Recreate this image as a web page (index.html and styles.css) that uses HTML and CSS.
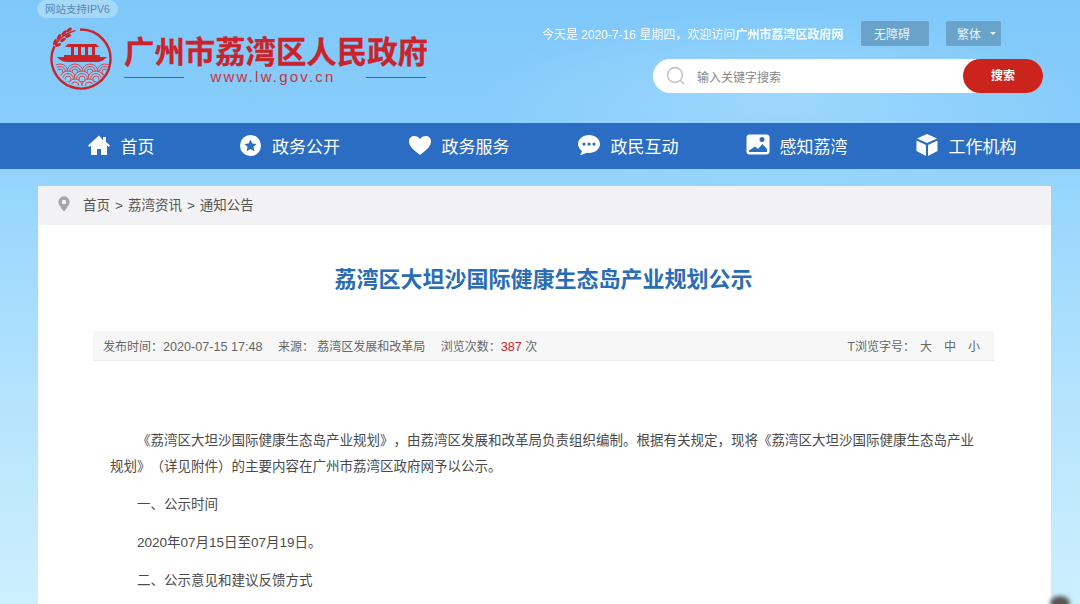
FILE: index.html
```html
<!DOCTYPE html>
<html lang="zh">
<head>
<meta charset="utf-8">
<title>荔湾区大坦沙国际健康生态岛产业规划公示</title>
<link rel="stylesheet" href="styles.css">
</head>
<body>
<header class="header">
  <div class="brand">
    <span class="ipv6">网站支持IPV6</span>
    <div class="logo-row">
      <svg class="emblem" viewBox="0 0 64 64" width="64" height="64">
        <defs><clipPath id="waves"><circle cx="32" cy="32" r="27"/></clipPath></defs>
        <path d="M30 2.500A29.500 29.500 0 1 1 4.500 19" fill="none" stroke="#c9242b" stroke-width="2.400"/>
        <g fill="#c9242b">
          <path d="M5 18c2-6 9-12 20-15l1 1c-10 3-17 8-20 15z"/>
          <ellipse cx="5" cy="15" rx="1.600" ry="3.200" transform="rotate(20 5 15)"/>
          <ellipse cx="9" cy="10" rx="1.600" ry="3.200" transform="rotate(30 9 10)"/>
          <ellipse cx="14" cy="6" rx="1.600" ry="3.200" transform="rotate(40 14 6)"/>
          <ellipse cx="19" cy="3" rx="1.600" ry="3.200" transform="rotate(55 19 3)"/>
          <ellipse cx="8" cy="18" rx="3.200" ry="1.500" transform="rotate(-20 8 18)"/>
          <ellipse cx="13" cy="13" rx="3.200" ry="1.500" transform="rotate(-30 13 13)"/>
          <ellipse cx="18" cy="9" rx="3.200" ry="1.500" transform="rotate(-20 18 9)"/>
          <path d="M18 17h28l3 3H15z"/>
          <path d="M21 20h3v8h-3zM28 20h3v8h-3zM35 20h3v8h-3zM42 20h3v8h-3z"/>
          <path d="M14 28h36v2H14z"/>
          <path d="M7 30h50c-3 3-6 5-10 5H17c-4 0-7-2-10-5z"/>
        </g>
        <g clip-path="url(#waves)" fill="none" stroke="#d5454a" stroke-width="1">
          <circle cx="10" cy="45" r="8"/><circle cx="10" cy="45" r="5.500"/><circle cx="10" cy="45" r="3"/>
          <circle cx="25" cy="45" r="8"/><circle cx="25" cy="45" r="5.500"/><circle cx="25" cy="45" r="3"/>
          <circle cx="40" cy="45" r="8"/><circle cx="40" cy="45" r="5.500"/><circle cx="40" cy="45" r="3"/>
          <circle cx="55" cy="45" r="8"/><circle cx="55" cy="45" r="5.500"/><circle cx="55" cy="45" r="3"/>
          <circle cx="18" cy="52" r="8" fill="#8fd0f8"/><circle cx="18" cy="52" r="5.500"/><circle cx="18" cy="52" r="3"/>
          <circle cx="32" cy="52" r="8" fill="#8fd0f8"/><circle cx="32" cy="52" r="5.500"/><circle cx="32" cy="52" r="3"/>
          <circle cx="46" cy="52" r="8" fill="#8fd0f8"/><circle cx="46" cy="52" r="5.500"/><circle cx="46" cy="52" r="3"/>
          <circle cx="25" cy="59" r="7" fill="#8fd0f8"/><circle cx="25" cy="59" r="4"/>
          <circle cx="39" cy="59" r="7" fill="#8fd0f8"/><circle cx="39" cy="59" r="4"/>
        </g>
      </svg>
      <div class="wordmark">
        <div class="site-name">广州市荔湾区人民政府</div>
        <div class="site-url"><i class="rule"></i><span>www.lw.gov.cn</span><i class="rule"></i></div>
      </div>
    </div>
  </div>
  <div class="tools">
    <div class="tool-row">
      <span class="greeting">今天是 2020-7-16 星期四，欢迎访问<b>广州市荔湾区政府网</b></span>
      <span class="chip chip-wide">无障碍</span>
      <span class="chip chip-lang">繁体<i class="caret"></i></span>
    </div>
    <div class="search">
      <svg class="search-icon" viewBox="0 0 20 20" width="20" height="20"><circle cx="9" cy="9" r="7.400" fill="none" stroke="#c4c4c4" stroke-width="1.600"/><path d="M14.500 14.500l3.500 3.500" stroke="#c4c4c4" stroke-width="1.600"/></svg>
      <span class="search-text">输入关键字搜索</span>
      <span class="search-btn">搜索</span>
    </div>
  </div>
</header>

<nav class="nav">
  <div class="nav-inner">
    <a class="nav-item"><svg viewBox="0 0 24 24" width="24" height="24"><path fill="#fff" d="M12 2.500 1 12.600l1.300 1.300L4 12.500V22h6v-6h4v6h6v-9.500l1.700 1.400 1.300-1.300-4-3.700V4h-3v3.200z"/></svg>首页</a>
    <a class="nav-item"><svg viewBox="0 0 24 24" width="23" height="23"><path fill="#fff" fill-rule="evenodd" d="M12 1a11 11 0 1 0 0 22 11 11 0 0 0 0-22zm0 4.800 1.900 4.100 4.500.5-3.300 3 .9 4.500-4-2.300-4 2.300.9-4.500-3.300-3 4.500-.5z"/></svg>政务公开</a>
    <a class="nav-item"><svg viewBox="0 0 24 24" width="24" height="24"><path fill="#fff" d="M12 22C5 16.500 1 13 1 8.200 1 5 3.500 3 6.300 3 8.600 3 10.700 4.200 12 6.200 13.300 4.200 15.400 3 17.700 3 20.500 3 23 5 23 8.200 23 13 19 16.500 12 22z"/></svg>政务服务</a>
    <a class="nav-item"><svg viewBox="0 0 24 24" width="24" height="24"><path fill="#fff" fill-rule="evenodd" d="M12 2C5.900 2 1 6 1 11c0 2.800 1.500 5.200 3.900 6.900-.2 1.500-1 3-2.100 4.100 2.500-.1 4.800-1 6.400-2.300.9.200 1.800.3 2.800.3 6.100 0 11-4 11-9s-4.900-9-11-9zM7 9.500a1.600 1.600 0 1 1 0 3.200 1.600 1.600 0 0 1 0-3.200zm5 0a1.600 1.600 0 1 1 0 3.200 1.600 1.600 0 0 1 0-3.200zm5 0a1.600 1.600 0 1 1 0 3.200 1.600 1.600 0 0 1 0-3.200z"/></svg>政民互动</a>
    <a class="nav-item"><svg viewBox="0 0 24 24" width="24" height="24"><path fill="#fff" fill-rule="evenodd" d="M3.500 1.500h17a3 3 0 0 1 3 3v14a3 3 0 0 1-3 3h-17a3 3 0 0 1-3-3v-14a3 3 0 0 1 3-3zM3 17.500V19h18v-3l-4.500-5-4.500 5-3-2.500zM16 4a2.500 2.500 0 1 0 0 5 2.500 2.500 0 0 0 0-5z"/></svg>感知荔湾</a>
    <a class="nav-item"><svg viewBox="0 0 24 24" width="24" height="24"><path fill="#fff" d="M12 1 2 5.500 12 10l10-4.500zM1.500 7.500V18l9.500 5V12zM22.500 7.500 13 12v11l9.500-5z"/></svg>工作机构</a>
  </div>
</nav>

<main class="card">
  <div class="crumbs">
    <svg viewBox="0 0 14 18" width="12" height="16"><path fill="#a6a6a6" fill-rule="evenodd" d="M7 0a6.500 6.500 0 0 0-6.500 6.500C.5 11 7 18 7 18s6.500-7 6.500-11.500A6.500 6.500 0 0 0 7 0zm0 4a2.600 2.600 0 1 1 0 5.200A2.600 2.600 0 0 1 7 4z"/></svg>
    <div class="crumb-text"><span>首页</span><span>&gt;</span><span>荔湾资讯</span><span>&gt;</span><span>通知公告</span></div>
  </div>
  <h1 class="title">荔湾区大坦沙国际健康生态岛产业规划公示</h1>
  <div class="meta">
    <div class="meta-left">
      <span>发布时间：<span class="num">2020-07-15 17:48</span></span>
      <span>来源：&nbsp;荔湾区发展和改革局</span>
      <span>浏览次数：<em class="count">387</em> 次</span>
    </div>
    <div class="meta-right"><span>T浏览字号：</span><div class="sizes"><span>大</span><span>中</span><span>小</span></div></div>
  </div>
  <article class="body">
    <p class="indent">《荔湾区大坦沙国际健康生态岛产业规划》，由荔湾区发展和改革局负责组织编制。根据有关规定，现将《荔湾区大坦沙国际健康生态岛产业规划》（详见附件）的主要内容在广州市荔湾区政府网予以公示。</p>
    <p class="indent">一、公示时间</p>
    <p class="indent">2020年07月15日至07月19日。</p>
    <p class="indent">二、公示意见和建议反馈方式</p>
  </article>
</main>
<div class="corner"></div>
</body>
</html>
```

FILE: styles.css
```css
* { box-sizing: border-box; }
html, body { margin: 0; height: 604px; overflow: hidden; }
body {
  position: relative;
  font-family: "Liberation Sans", "Noto Sans CJK SC", sans-serif;
  text-spacing-trim: space-all;
  background:
    radial-gradient(ellipse 300px 90px at 780px 100px, rgba(175, 225, 255, .55), rgba(175, 225, 255, 0)),
    linear-gradient(180deg, #7fc8fa 0%, #88cdfb 20%, #97d6fd 32%, #b4e3fd 65%, #cdf0fd 100%);
}
.header { height: 123px; display: flex; justify-content: space-between; }
.brand { padding-left: 37px; }
.ipv6 {
  display: block; width: 81px; height: 18px; line-height: 19px;
  border-radius: 9px; text-align: center;
  background: #a5d9f7; color: #5587b8; font-size: 10.500px;
}
.logo-row { display: flex; padding: 9px 0 0 13px; }
.emblem { flex: none; }
.wordmark { margin-left: 10px; padding-top: 9px; }
.site-name {
  width: 304px; font-size: 30.400px; line-height: 32px; font-weight: 700; color: #c9242b;
  white-space: nowrap; -webkit-text-stroke: .3px #c9242b;
}
.site-url { display: flex; align-items: center; justify-content: space-between; width: 304px; padding-right: 2px; }
.site-url span { margin-right: 4px; color: #c9343a; font-size: 15px; line-height: 18px; letter-spacing: 2.200px; }
.rule { display: block; width: 60px; height: 1px; background: #c9343a; }
.tools { width: 538px; padding: 21px 37px 0 0; }
.tool-row { display: flex; align-items: center; height: 25px; }
.greeting { width: 319px; color: #fff; font-size: 12px; white-space: nowrap; opacity: .95; }
.greeting b { font-weight: 700; }
.chip {
  display: flex; align-items: center; justify-content: center;
  height: 25px; border-radius: 2px; background: #69a3c9; color: #e8f3fa; font-size: 12px;
}
.chip-wide { width: 68px; padding-right: 6px; }
.chip-lang { width: 55px; margin-left: 17px; padding-left: 6px; gap: 9px; }
.caret { width: 0; height: 0; border: 3px solid transparent; border-top: 3px solid #e8f3fa; border-bottom: 0; }
.search {
  display: flex; align-items: center; width: 390px; height: 34px; margin: 13px 0 0 111px;
  border-radius: 17px; background: #fff;
}
.search-icon { margin-left: 13px; flex: none; }
.search-text { margin-left: 11px; font-size: 12px; color: #888; flex: 1; }
.search-btn {
  width: 80px; height: 34px; line-height: 34px; border-radius: 17px; text-align: center;
  background: #ca241d; color: #fff; font-size: 12px; font-weight: 700;
}
.nav { height: 46px; background: #2a6dc3; }
.nav-inner { display: grid; grid-template-columns: repeat(6, 169px); margin-left: 36px; height: 46px; }
.nav-item { display: flex; align-items: center; justify-content: center; gap: 10px; padding-bottom: 2px; color: #fff; font-size: 17px; white-space: nowrap; }
.nav-item svg { flex: none; }
.card { width: 1013px; height: 418px; margin: 17px 0 0 38px; background: #fff; }
.crumbs {
  display: flex; align-items: center; height: 39px; padding: 0 0 3px 20px;
  background: #f2f2f4; color: #555; font-size: 13.500px;
}
.crumb-text { display: flex; align-items: baseline; gap: 5px; margin-left: 13px; }
.title { margin: 41px 0 0; padding-right: 2px; height: 28px; line-height: 28px; text-align: center; font-size: 22px; font-weight: 700; color: #2a6db5; }
.meta {
  display: flex; justify-content: space-between; align-items: center;
  width: 901px; height: 30px; margin: 37px 0 0 55px; padding: 0 14px 0 10px;
  background: #f7f7f7; border-bottom: 1px solid #ececec; color: #666; font-size: 12px;
}
.num { font-size: 12.600px; }
.meta-left { display: flex; gap: 15.500px; }
.count { font-style: normal; color: #c9242b; font-size: 12.600px; }
.meta-right { display: flex; gap: 5px; }
.sizes { display: flex; gap: 12px; }
.body { padding: 67px 76px 0 72px; color: #4a4a4a; font-size: 13.500px; line-height: 26px; }
.body p { margin: 0 0 12px; }
.indent { text-indent: 27px; }
.corner {
  position: absolute; right: 10px; bottom: -6px; width: 20px; height: 14px;
  border-radius: 50%; background: #555; filter: blur(2px);
}
```
